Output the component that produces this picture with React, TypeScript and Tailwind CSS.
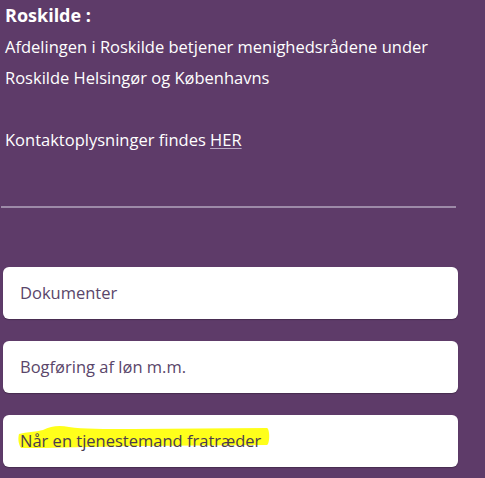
import React from "react";

const links = ["Dokumenter", "Bogføring af løn m.m."];

export default function App() {
  return (
    <div
      className="min-h-[478px] w-full bg-[#5e3b69] text-white"
      style={{ fontFamily: '"Open Sans", "Noto Sans", sans-serif' }}
    >
      <div className="pl-[5px] text-[16.5px] leading-[31px]">
        <p className="text-[18px] font-bold">Roskilde :</p>
        <p>Afdelingen i Roskilde betjener menighedsrådene under</p>
        <p>Roskilde Helsingør og Københavns</p>
        <p>&nbsp;</p>
        <p>
          Kontaktoplysninger findes{" "}
          <a href="#" className="underline decoration-[#b9a8c2] underline-offset-2">
            HER
          </a>
        </p>
      </div>

      <div className="ml-[1px] mt-[51px] h-[2px] w-[455px] bg-[#9d8aa8]" />

      <div className="mt-[59px] flex flex-col gap-[22px] pl-[3px]">
        {links.map((label) => (
          <div
            key={label}
            className="flex h-[52px] w-[455px] items-center rounded-[6px] bg-white pl-[17px] text-[16.5px] text-[#5a466a] shadow-[0_1px_1px_rgba(0,0,0,0.25)]"
          >
            {label}
          </div>
        ))}
        <div className="relative flex h-[52px] w-[455px] items-center rounded-[6px] bg-white pl-[17px] text-[16.5px] text-[#4a3b50] shadow-[0_1px_1px_rgba(0,0,0,0.25)]">
          {/* hand drawn marker highlight */}
          <svg
            className="absolute inset-0"
            width="455"
            height="52"
            viewBox="0 0 455 52"
          >
            <path
              d="M16 19 C 24 17 32 17 40 15 C 48 11 56 10 66 12 C 80 14 100 14 130 14 L 264 13 C 267 14 267 29 264 30 L 130 31 L 40 33 L 18 33 C 15 28 15 23 16 19 Z"
              fill="#ffff1a"
            />
          </svg>
          <span className="relative">Når en tjenestemand fratræder</span>
        </div>
      </div>
    </div>
  );
}
